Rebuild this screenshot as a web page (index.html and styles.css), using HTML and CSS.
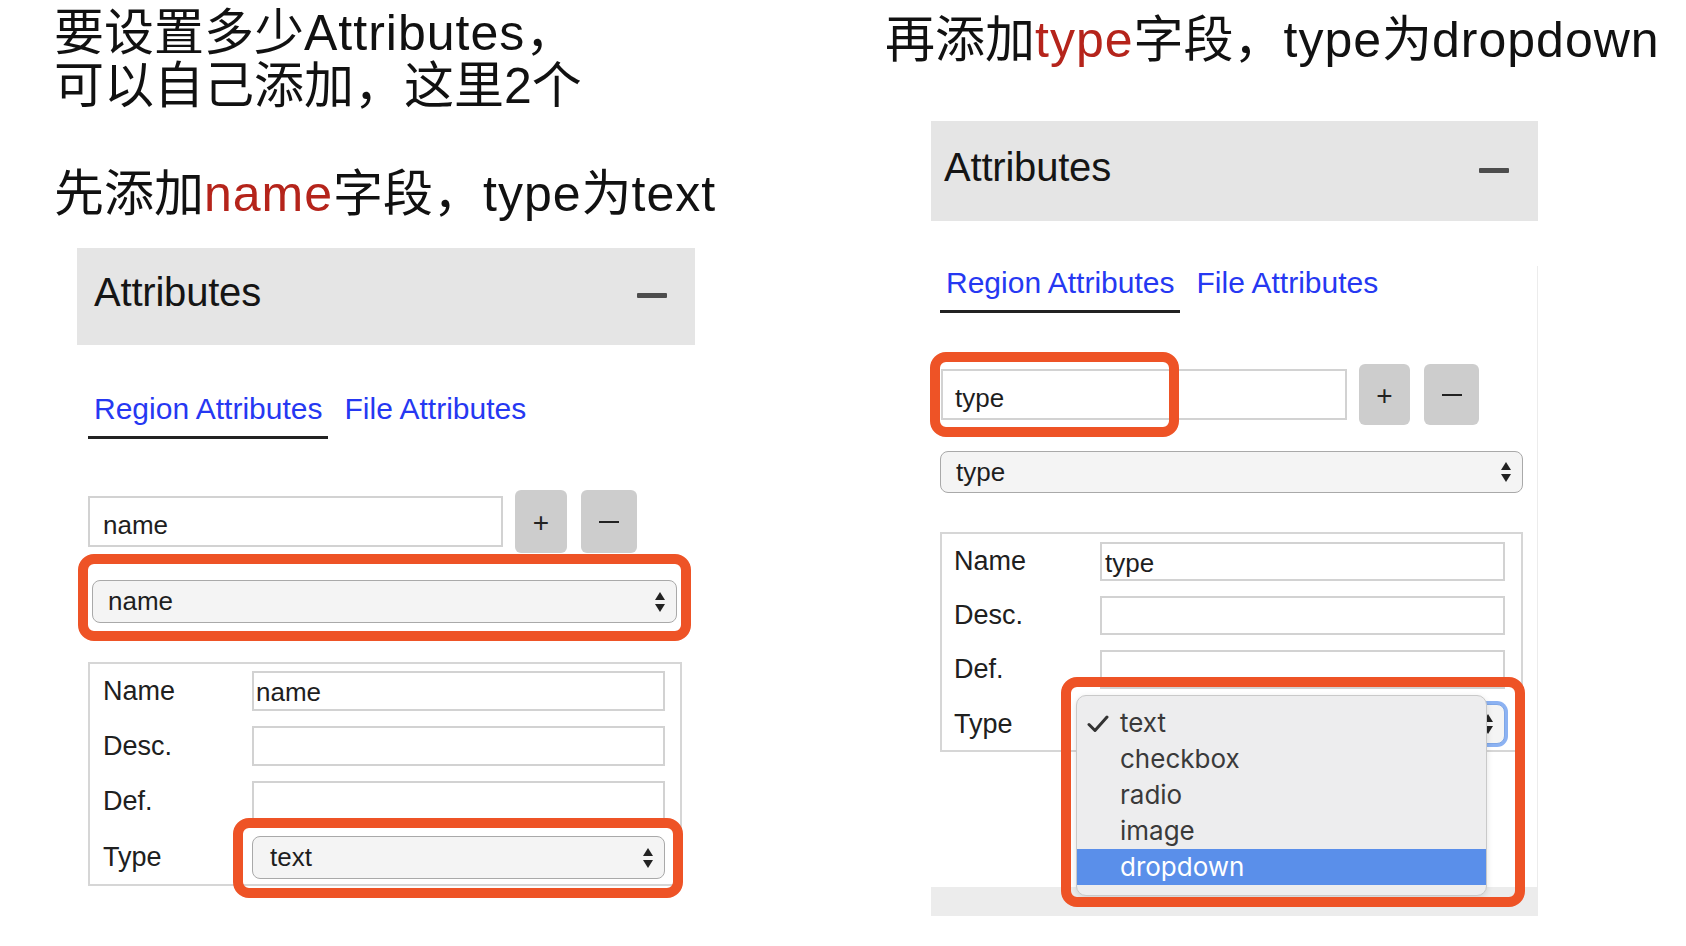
FILE: index.html
```html
<!DOCTYPE html>
<html lang="zh">
<head>
<meta charset="utf-8">
<title>Attributes</title>
<link rel="stylesheet" href="styles.css">
</head>
<body>
<div class="page">
  <section class="col col-left">
    <div class="note note-first">
      <p>要设置多少<span class="en">Attributes</span>，</p>
      <p>可以自己添加，这里2个</p>
    </div>
    <p class="note note-second">先添加<span class="en red">name</span>字段，<span class="en">type</span>为<span class="en">text</span></p>

    <div class="panel panel-left">
      <div class="panel-head head-left"><span class="head-title">Attributes</span><span class="collapse"></span></div>
      <div class="panel-body body-left">
        <div class="tabs tabs-left">
          <span class="tab active">Region Attributes</span>
          <span class="tab">File Attributes</span>
        </div>
        <div class="add-row">
          <div class="field key-left">name</div>
          <div class="btn btn-plus">+</div>
          <div class="btn btn-minus"><span class="bar"></span></div>
        </div>
        <div class="hl-wrap">
          <div class="select attr-select-left"><span>name</span>
            <svg class="arrows" width="12" height="22" viewBox="0 0 12 22"><path d="M1 9 L6 1 L11 9 Z M1 13 L6 21 L11 13 Z" fill="#222"/></svg>
          </div>
          <div class="hl hl-name"></div>
        </div>
        <div class="props props-left">
          <span class="lbl">Name</span><div class="field small">name</div>
          <span class="lbl">Desc.</span><div class="field small"></div>
          <span class="lbl">Def.</span><div class="field small"></div>
          <span class="lbl">Type</span>
          <div class="hl-wrap">
            <div class="select type-select"><span>text</span>
              <svg class="arrows" width="12" height="22" viewBox="0 0 12 22"><path d="M1 9 L6 1 L11 9 Z M1 13 L6 21 L11 13 Z" fill="#222"/></svg>
            </div>
            <div class="hl hl-type"></div>
          </div>
        </div>
      </div>
    </div>
  </section>

  <section class="col col-right">
    <p class="note note-right">再添加<span class="en red">type</span>字段，<span class="en">type</span>为<span class="en">dropdown</span></p>

    <div class="panel panel-right">
      <div class="panel-head head-right"><span class="head-title">Attributes</span><span class="collapse"></span></div>
      <div class="panel-body body-right">
        <div class="tabs tabs-right">
          <span class="tab active">Region Attributes</span>
          <span class="tab">File Attributes</span>
        </div>
        <div class="add-row">
          <div class="hl-wrap">
            <div class="field key-right">type</div>
            <div class="hl hl-key"></div>
          </div>
          <div class="btn btn-plus r">+</div>
          <div class="btn btn-minus r"><span class="bar"></span></div>
        </div>
        <div class="select attr-select-right"><span>type</span>
          <svg class="arrows" width="12" height="22" viewBox="0 0 12 22"><path d="M1 9 L6 1 L11 9 Z M1 13 L6 21 L11 13 Z" fill="#222"/></svg>
        </div>
        <div class="props props-right">
          <span class="lbl">Name</span><div class="field small r">type</div>
          <span class="lbl">Desc.</span><div class="field small r"></div>
          <span class="lbl">Def.</span><div class="field small r"></div>
          <span class="lbl">Type</span>
          <div class="hl-wrap">
            <div class="select type-select focus"><span></span>
              <svg class="arrows" width="12" height="22" viewBox="0 0 12 22"><path d="M1 9 L6 1 L11 9 Z M1 13 L6 21 L11 13 Z" fill="#222"/></svg>
            </div>
            <ul class="menu">
              <li class="checked"><svg class="check" width="22" height="18" viewBox="0 0 22 18"><path d="M2 9.5 L8 15.5 L20 2" fill="none" stroke="#333" stroke-width="3" stroke-linecap="round" stroke-linejoin="round"/></svg>text</li>
              <li>checkbox</li>
              <li>radio</li>
              <li>image</li>
              <li class="active">dropdown</li>
            </ul>
            <div class="hl hl-menu"></div>
          </div>
        </div>
        <div class="footer-bar"></div>
      </div>
    </div>
  </section>
</div>
</body>
</html>
```

FILE: styles.css
```css
* { box-sizing: border-box; }

html, body {
  margin: 0;
  padding: 0;
  background: #ffffff;
}

body {
  font-family: "Liberation Sans", "Noto Sans CJK SC", sans-serif;
  color: #111;
}

.page {
  display: flex;
  padding-left: 54px;
  width: 1686px;
  height: 946px;
  overflow: hidden;
}

.col-left { width: 831px; flex: none; }
.col-right { flex: none; }

/* ---------- notes ---------- */
.note {
  margin: 0;
  font-family: "Liberation Sans", "Noto Sans CJK SC", sans-serif;
  font-size: 50px;
  line-height: 53px;
  color: #111;
  white-space: nowrap;
}
.note p { margin: 0; }
.note .en { letter-spacing: 1px; }
.note-first { margin-top: 7px; }
.note-second { margin-top: 55px; }
.note-right { margin-top: 14px; }
.red { color: #b5241b; }

/* ---------- panel ---------- */
.panel-left { margin-top: 27px; margin-left: 23px; width: 618px; }
.panel-right { margin-top: 54px; margin-left: 46px; width: 607px; }

.panel-head {
  display: flex;
  align-items: center;
  justify-content: space-between;
  background: #e5e5e5;
}
.head-left { height: 97px; padding: 0 28px 8px 17px; }
.head-right { height: 100px; padding: 0 29px 8px 13px; }

.head-title {
  font-size: 40px;
  color: #151515;
  letter-spacing: -0.2px;
}
.collapse {
  width: 30px;
  height: 5px;
  background: #4d4d4d;
  border-radius: 1px;
  margin-top: 6px;
}

.body-left { padding: 0 13px 0 11px; }
.body-right { padding: 0 15px 0 9px; border-right: 1px solid #ececec; }

/* ---------- tabs ---------- */
.tabs { display: flex; gap: 10px; }
.tabs-left { margin-top: 47px; }
.tabs-right { margin-top: 45px; }
.tab {
  font-size: 30px;
  line-height: 34px;
  padding: 0 6px 10px;
  color: #2638f2;
  border-bottom: 3px solid transparent;
}
.tab.active { border-bottom-color: #222; }

/* ---------- add row ---------- */
.add-row {
  display: flex;
  align-items: center;
  margin-top: 51px;
}
.field {
  border: 2px solid #d2d2d2;
  background: #fff;
  font-size: 26px;
  color: #1e1e1e;
  display: flex;
  align-items: center;
}
.key-left { width: 415px; height: 51px; padding: 8px 0 0 13px; }
.key-right { width: 406px; height: 51px; padding: 8px 0 0 12px; margin-left: 1px; }

.btn {
  background: #cdcdcd;
  border-radius: 6px;
  height: 63px;
  display: flex;
  align-items: center;
  justify-content: center;
  font-size: 28px;
  color: #222;
}
.btn-plus { width: 52px; margin-left: 12px; padding-top: 3px; }
.btn-minus { width: 56px; margin-left: 14px; }
.btn.r { height: 61px; }
.btn-plus.r { width: 51px; margin-left: 12px; }
.btn-minus.r { width: 55px; margin-left: 14px; }
.bar { width: 20px; height: 2px; background: #222; }

/* ---------- selects ---------- */
.select {
  display: flex;
  align-items: center;
  justify-content: space-between;
  background: #f4f4f4;
  border: 1.5px solid #a9a9a9;
  border-radius: 8px;
  font-size: 26px;
  color: #1e1e1e;
  padding: 0 10px 0 15px;
}
.arrows { flex: none; }

.hl-wrap { position: relative; }

.attr-select-left { margin: 27px 0 0 4px; width: 585px; height: 43px; }
.attr-select-right { margin: 26px 0 0 0; width: 583px; height: 42px; }

/* ---------- props box ---------- */
.props {
  display: grid;
  align-items: center;
  border: 2px solid #d6d6d6;
  row-gap: 15px;
}
.props-left {
  margin-top: 39px;
  width: 594px;
  grid-template-columns: 149px 413px;
  padding: 7px 0 5px 13px;
}
.props-right {
  margin-top: 39px;
  width: 583px;
  grid-template-columns: 146px 405px;
  padding: 8px 0 6px 12px;
}
.lbl {
  font-size: 27px;
  color: #202020;
}
.field.small { height: 40px; padding: 3px 0 0 2px; font-size: 26px; }
.field.small.r { height: 39px; padding: 3px 0 0 3px; }

.type-select { height: 43px; padding-left: 17px; }
.props-right .type-select { height: 40px; }
.type-select.focus {
  border-color: #7ea6e6;
  box-shadow: 0 0 0 3px #8cb2f2;
}

/* ---------- annotation highlight boxes ---------- */
.hl {
  position: absolute;
  border: 10px solid #ee5326;
  border-radius: 16px;
  pointer-events: none;
  z-index: 3;
}
.hl-name { left: -10px; top: -26px; right: -9px; bottom: -18px; }
.hl-type { left: -19px; top: -18px; right: -18px; bottom: -19px; }
.hl-key { left: -10px; top: -17px; width: 249px; height: 85px; }
.hl-menu { left: -39px; top: -27px; width: 464px; height: 230px; }

/* ---------- dropdown menu ---------- */
.menu {
  position: absolute;
  left: -24px;
  top: -9px;
  width: 411px;
  margin: 0;
  padding: 9px 0 10px;
  list-style: none;
  background: #ededee;
  border: 1px solid #c9c9c9;
  border-radius: 10px;
  box-shadow: 0 2px 6px rgba(0,0,0,0.12);
  z-index: 2;
}
.menu li {
  position: relative;
  height: 36px;
  line-height: 36px;
  padding-left: 43px;
  font-family: "Inter", "Liberation Sans", sans-serif;
  font-size: 26px;
  color: #3a3a3a;
}
.menu li.active {
  background: #5a8fea;
  color: #fff;
}
.check {
  position: absolute;
  left: 10px;
  top: 10px;
}

.footer-bar {
  margin: 135px -15px 0 -9px;
  height: 29px;
  background: #ececec;
}
```
